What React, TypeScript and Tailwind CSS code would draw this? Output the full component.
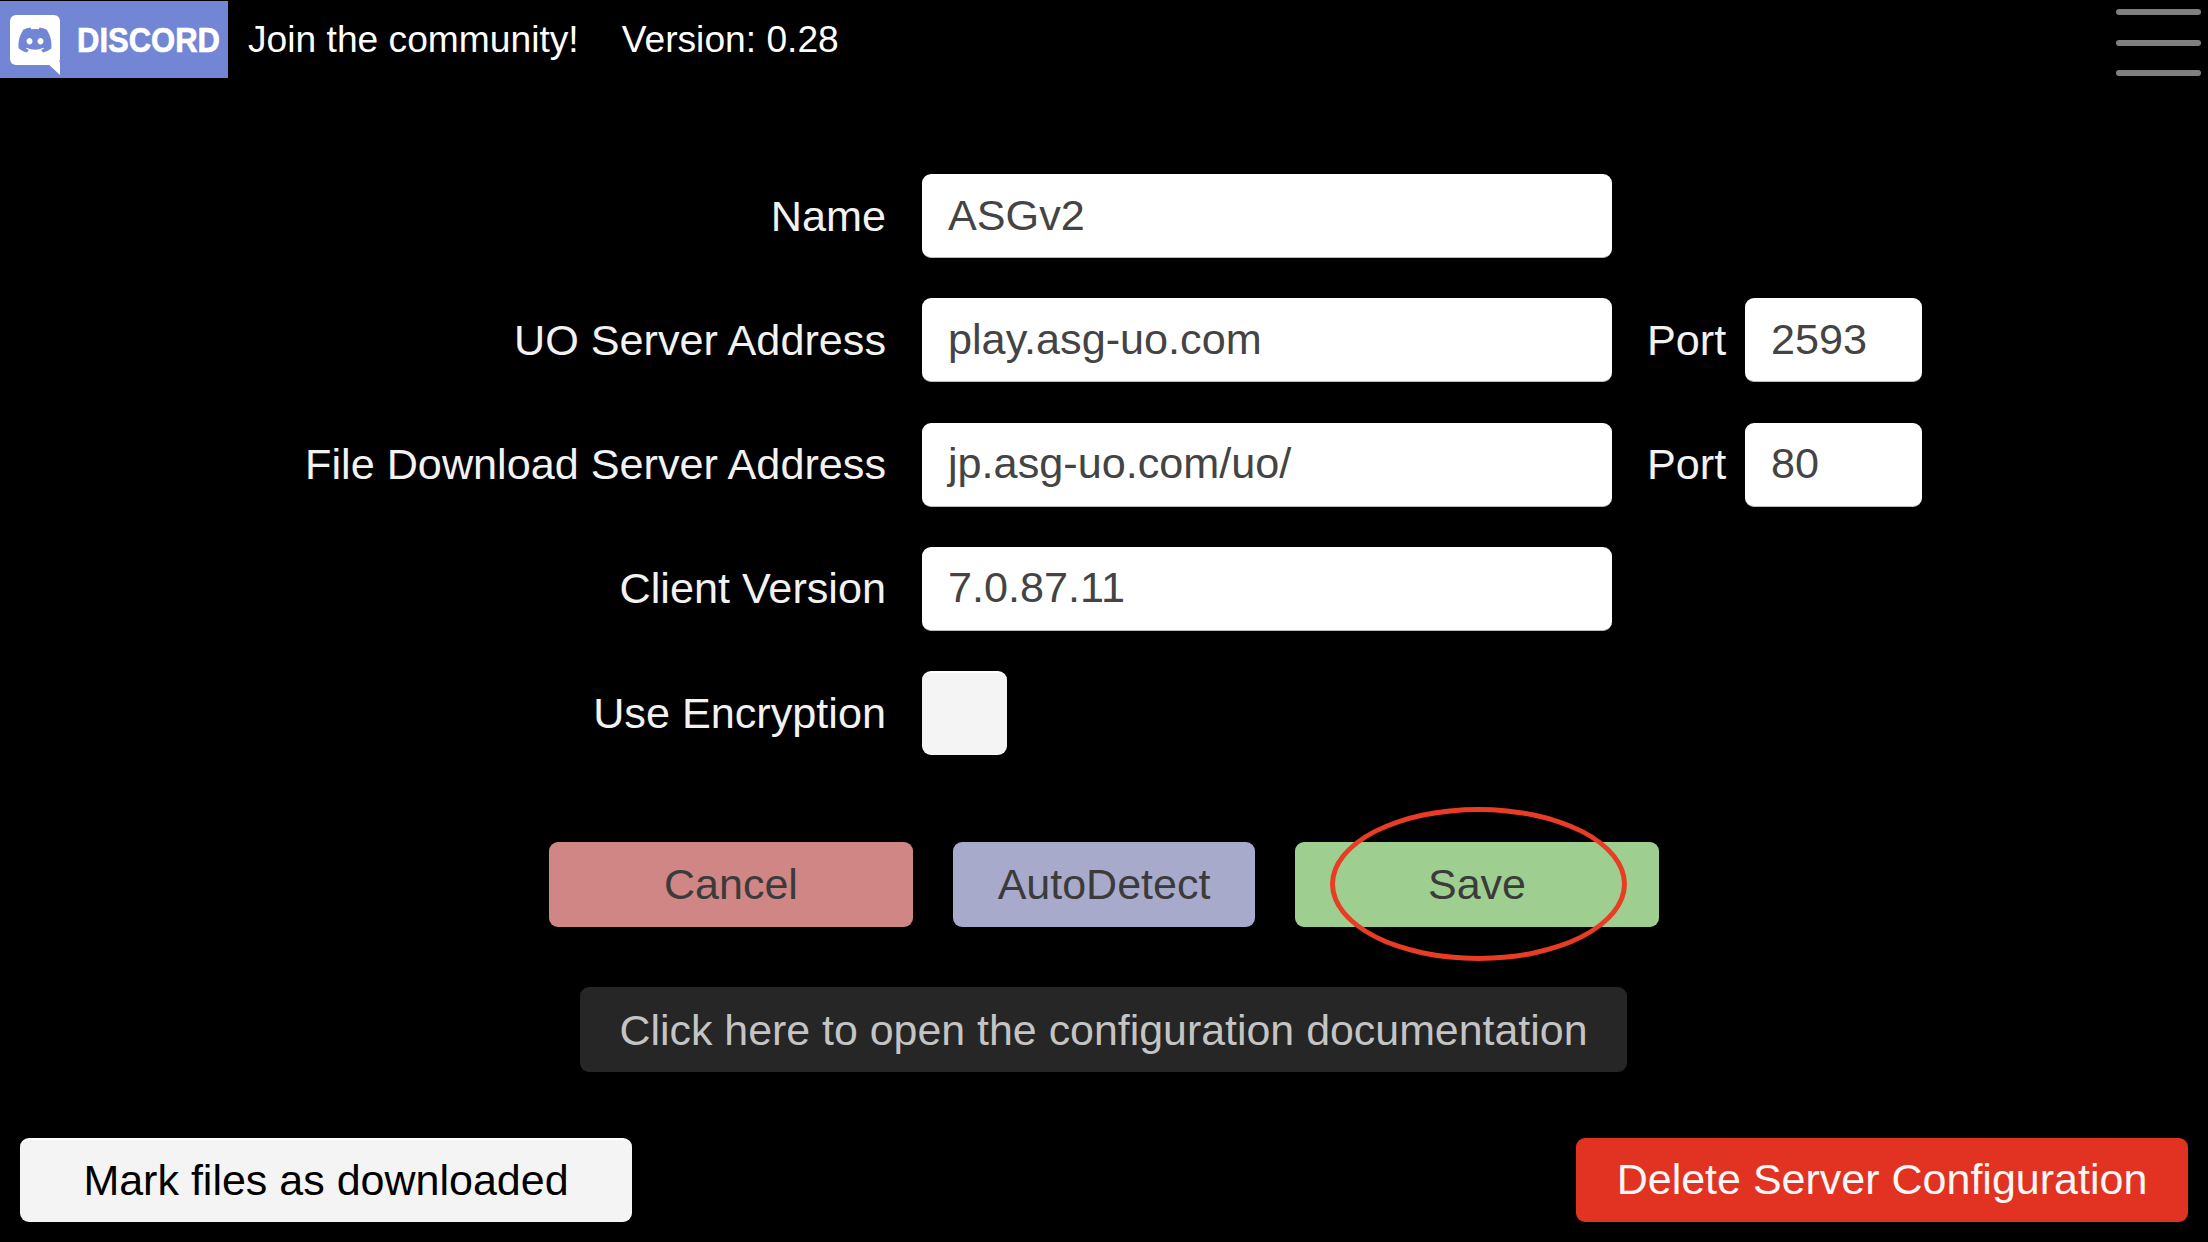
import { FaDiscord } from 'react-icons/fa';

const font = "font-['Liberation_Sans',Arial,sans-serif]";

function FormRow({
  label,
  value,
  port,
}: {
  label: string;
  value: string;
  port?: string;
}) {
  return (
    <div className="flex h-[84px] items-center">
      <div className="w-[886px] text-right text-[43.2px] text-[#f2f2f2]">{label}</div>
      <div className="ml-[36px] flex h-full w-[690px] items-center rounded-[9px] border-b border-b-[#bbbbbb] bg-white pb-[1px] pl-[26px] text-[43.2px] text-[#444444]">
        {value}
      </div>
      {port && (
        <>
          <div className="ml-[35px] w-[78px] text-[43.2px] text-[#f2f2f2]">Port</div>
          <div className="ml-[20px] flex h-full w-[177px] items-center rounded-[9px] border-b border-b-[#bbbbbb] bg-white pb-[1px] pl-[26px] text-[43.2px] text-[#444444]">
            {port}
          </div>
        </>
      )}
    </div>
  );
}

export default function App() {
  return (
    <div className={`relative flex h-[1242px] w-[2208px] flex-col overflow-hidden bg-black ${font}`}>
      <header className="flex h-[96px] items-start justify-between">
        <div className="flex items-center">
          <div className="mt-px flex h-[77px] w-[228px] items-center bg-[#7386d6] pl-[10px]">
            <div className="relative flex h-[50px] w-[50px] items-center justify-center rounded-[6px] bg-white">
              <FaDiscord className="h-[36px] w-[36px] text-[#7386d6]" aria-hidden="true" />
              <svg className="absolute left-[36px] top-[47px]" width="16" height="16" viewBox="0 0 16 16" aria-hidden="true">
                <path d="M0 0 L14 0 L14 13 Z" fill="#ffffff" />
              </svg>
            </div>
            <span className="ml-[17px] scale-y-[1.15] text-[31px] font-bold leading-none text-white [-webkit-text-stroke:0.6px_white]">
              DISCORD
            </span>
          </div>
          <span className="ml-[20px] mt-[2px] text-[37.2px] text-white">Join the community!</span>
          <span className="ml-[43px] mt-[2px] text-[37.2px] text-white">Version: 0.28</span>
        </div>
        <button className="mr-[7px] mt-[9px] flex w-[85px] flex-col gap-[24.5px]" aria-label="Menu">
          <span className="h-[6px] rounded-full bg-[#808080]" />
          <span className="h-[6px] rounded-full bg-[#808080]" />
          <span className="h-[6px] rounded-full bg-[#808080]" />
        </button>
      </header>

      <main className="mt-[78px] flex flex-col gap-[40.3px]">
        <FormRow label="Name" value="ASGv2" />
        <FormRow label="UO Server Address" value="play.asg-uo.com" port="2593" />
        <FormRow label="File Download Server Address" value="jp.asg-uo.com/uo/" port="80" />
        <FormRow label="Client Version" value="7.0.87.11" />
        <div className="flex h-[84px] items-center">
          <div className="w-[886px] text-right text-[43.2px] text-[#f2f2f2]">Use Encryption</div>
          <div className="ml-[36px] h-full w-[85px] rounded-[9px] border-t-2 border-t-white bg-[#f4f4f4]" />
        </div>
      </main>

      <div className="ml-[549px] mt-[87px] flex gap-[40px]">
        <button className="h-[85px] w-[364px] rounded-[9px] bg-[#cf8684] text-[43px] text-[#3b3b3b]">Cancel</button>
        <button className="h-[85px] w-[302px] rounded-[9px] bg-[#a8aacb] text-[43px] text-[#3b3b3b]">AutoDetect</button>
        <button className="h-[85px] w-[364px] rounded-[9px] bg-[#9fcf90] text-[43px] text-[#3b3b3b]">Save</button>
      </div>

      <div className="ml-[580px] mt-[60px] flex h-[85px] w-[1047px] items-center justify-center rounded-[9px] bg-[#262626] text-[42.9px] text-[#c4c4c4]">
        Click here to open the configuration documentation
      </div>

      <div className="ml-[20px] mr-[20px] mt-[66px] flex justify-between">
        <button className="h-[84px] w-[612px] rounded-[9px] border-t-2 border-t-white bg-[#f4f4f4] pb-[2px] text-[43px] text-black">
          Mark files as downloaded
        </button>
        <button className="h-[84px] w-[612px] rounded-[9px] bg-[#e23322] pb-[2px] text-[43px] text-[#f7f7f7]">
          Delete Server Configuration
        </button>
      </div>

      {/* red annotation circled over the Save button */}
      <div className="pointer-events-none absolute left-[1330px] top-[807px] h-[154px] w-[297px] rounded-[50%] border-[5px] border-[#e93c24]" />
    </div>
  );
}
